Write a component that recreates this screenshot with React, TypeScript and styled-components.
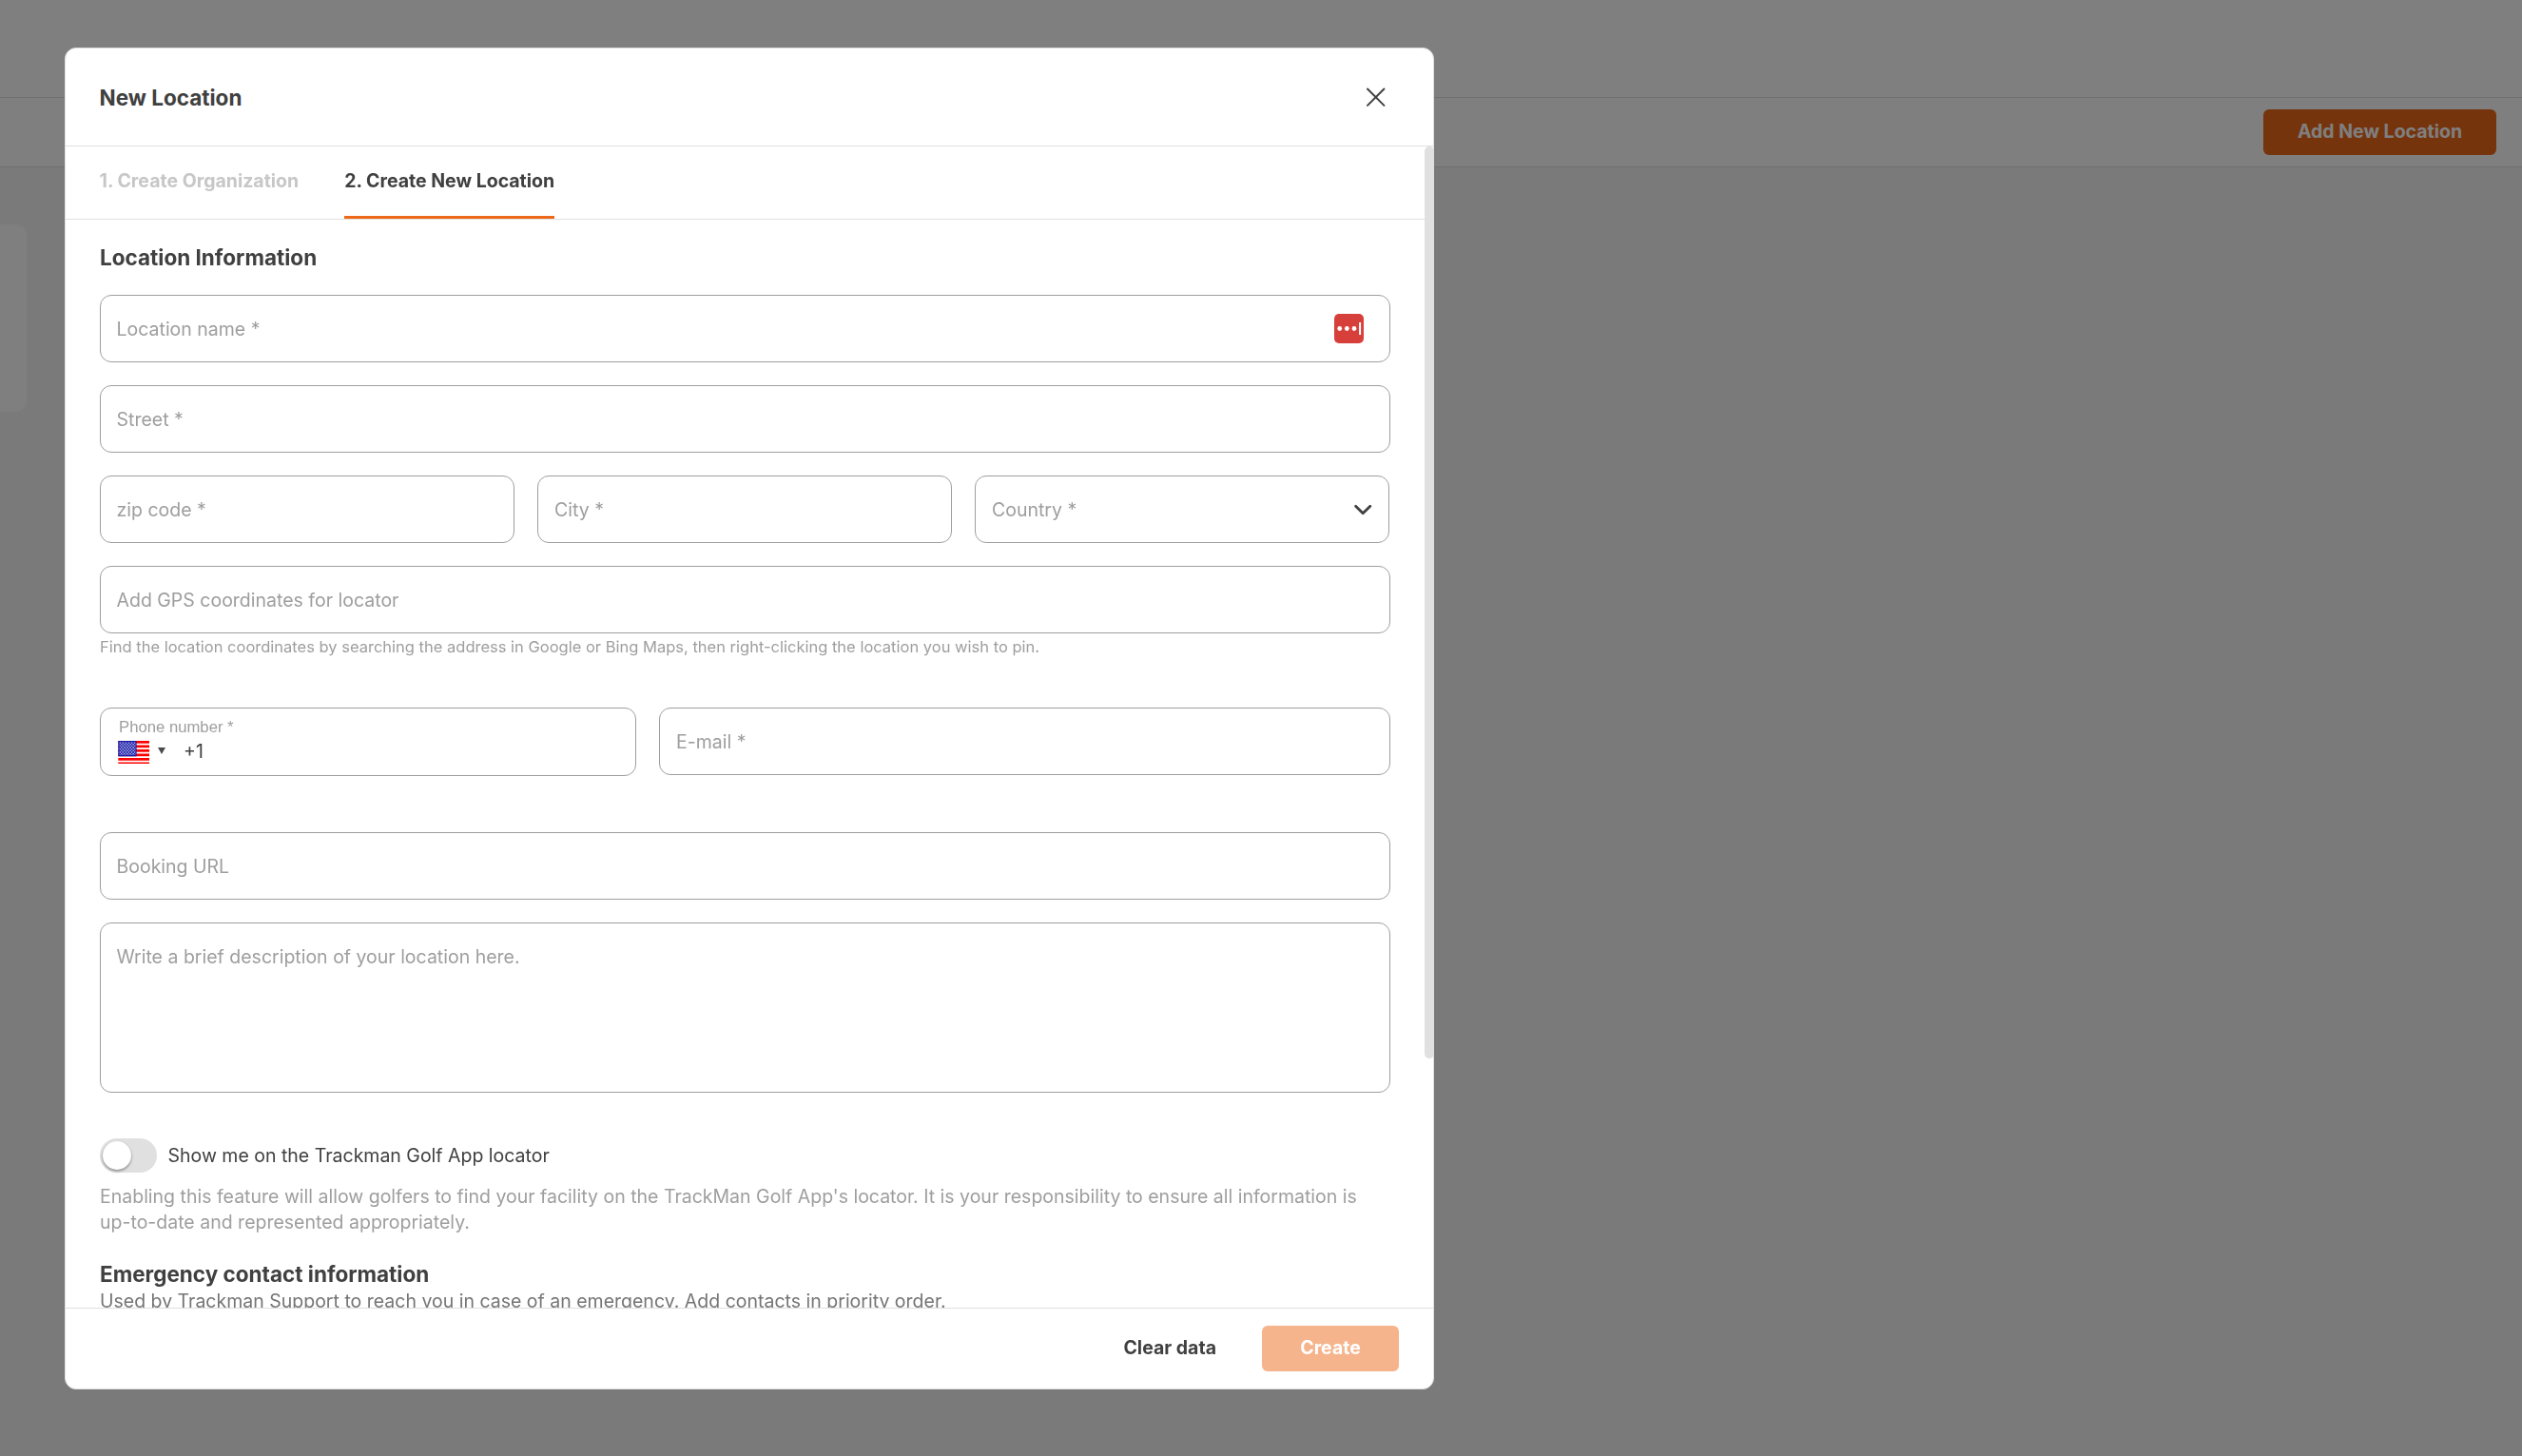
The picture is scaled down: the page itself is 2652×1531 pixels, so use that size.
import React from "react";
import styled, { createGlobalStyle } from "styled-components";

const color = {
  text: "#404040",
  helper: "#757575",
  muted: "#9e9e9e",
  disabled: "#c7c7c7",
  line: "#e0e0e0",
  page: "#f5f5f5",
  accent: "#ec691a",
};

const GlobalStyle = createGlobalStyle`
  *, *::before, *::after { box-sizing: border-box; }
  html, body { margin: 0; padding: 0; overflow: hidden; }
  body {
    font-family: Inter, "Liberation Sans", sans-serif;
    font-size: 19.5px;
    line-height: 27px;
    color: ${color.text};
  }
`;

/* Page behind the dialog */

const Page = styled.div`
  display: flex;
  flex-direction: column;
  height: 1531px;
  background: ${color.page};
`;

const TopBar = styled.header`
  height: 103px;
  background: #fff;
  border-bottom: 1px solid ${color.line};
`;

const Toolbar = styled.div`
  display: flex;
  align-items: center;
  justify-content: flex-end;
  height: 73px;
  padding-right: 27px;
  background: #fff;
  border-bottom: 1px solid ${color.line};
`;

const SideCard = styled.div`
  width: 28px;
  height: 197px;
  margin-top: 60px;
  background: #fff;
  border-radius: 0 12px 12px 0;
`;

const Button = styled.button<{ $kind: "primary" | "text"; $width?: number }>`
  display: flex;
  align-items: center;
  justify-content: center;
  width: ${(p) => (p.$width ? `${p.$width}px` : "auto")};
  height: 48px;
  padding: 0 24px 2px;
  border: 0;
  border-radius: 6px;
  background: ${(p) => (p.$kind === "primary" ? color.accent : "transparent")};
  color: ${(p) => (p.$kind === "primary" ? "#fff" : color.text)};
  font: 700 19.5px/27px Inter, "Liberation Sans", sans-serif;
  white-space: nowrap;

  &:disabled {
    background: #f5b48c;
  }
`;

/* Dialog */

const Overlay = styled.div`
  position: fixed;
  inset: 0;
  padding: 50px 0 0 68px;
  background: rgba(0, 0, 0, 0.5);
`;

const Dialog = styled.section`
  display: flex;
  flex-direction: column;
  width: 1440px;
  height: 1411px;
  background: #fff;
  border: 1px solid ${color.line};
  border-radius: 12px;
`;

const DialogHeader = styled.header`
  display: flex;
  align-items: center;
  justify-content: space-between;
  flex: none;
  height: 103px;
  padding: 0 50px 0 35.5px;
  border-bottom: 1px solid ${color.line};
`;

const Title = styled.h2<{ $drop?: number }>`
  margin: 0;
  padding-top: ${(p) => p.$drop ?? 0}px;
  font-size: 22.5px;
  line-height: 30px;
  font-weight: 700;
`;

const DialogBody = styled.div`
  display: flex;
  flex: none;
  height: 1221px;
  margin-right: -1px;
  overflow: hidden;
`;

const ScrollContent = styled.div`
  flex: 1;
  min-width: 0;
`;

const ScrollThumb = styled.div`
  width: 10px;
  height: 959px;
  border-radius: 5px;
  background: ${color.line};
`;

const Tabs = styled.nav`
  display: flex;
  gap: 48px;
  height: 77px;
  padding-left: 35.5px;
  border-bottom: 1px solid ${color.line};
`;

const Tab = styled.div<{ $active?: boolean }>`
  height: 76px;
  border-bottom: 3px solid ${(p) => (p.$active ? color.accent : "transparent")};
  color: ${(p) => (p.$active ? color.text : color.disabled)};
  font-weight: 700;
  line-height: 73px;
`;

const Form = styled.form`
  display: flex;
  flex-direction: column;
  padding: 25px 36px 0;
`;

const FieldStack = styled.div<{ $top: number }>`
  display: flex;
  flex-direction: column;
  gap: 24px;
  margin-top: ${(p) => p.$top}px;
`;

const ThreeColumns = styled.div`
  display: grid;
  grid-template-columns: repeat(3, 436px);
  column-gap: 24px;
`;

const ContactRow = styled.div`
  display: grid;
  grid-template-columns: 564px 1fr;
  column-gap: 24px;
  align-items: start;
  margin-top: 52px;
`;

const Field = styled.div<{ $end?: number; $start?: number }>`
  display: flex;
  align-items: center;
  justify-content: space-between;
  height: 71px;
  padding: 0 ${(p) => p.$end ?? 16}px 0 ${(p) => p.$start ?? 16.5}px;
  border: 1px solid ${color.muted};
  border-radius: 12px;
  color: ${color.muted};
`;

const Placeholder = styled.span`
  padding-top: 2px;
`;

const TextArea = styled(Field)`
  align-items: flex-start;
  height: 179px;
  padding-top: 20px;
`;

const PhoneField = styled(Field)`
  flex-direction: column;
  align-items: flex-start;
  justify-content: flex-start;
  height: 72px;
  padding: 10px 18px 0;
`;

const PhoneLabel = styled.span`
  padding-left: 1px;
  font: 16.7px/20px "Liberation Sans", Arial, sans-serif;
`;

const PhoneValue = styled.div`
  display: flex;
  align-items: center;
  height: 24px;
  margin-top: 4px;
`;

const Caret = styled.i`
  margin: 0 19px 3px 9px;
  border: 4px solid transparent;
  border-top: 7px solid #4a4a4a;
  border-bottom: 0;
`;

const DialCode = styled.span`
  padding-bottom: 2px;
  color: ${color.text};
`;

const Hint = styled.p`
  margin: 2px 0 0;
  color: ${color.muted};
  font-size: 16.5px;
  line-height: 24px;
`;

const SwitchRow = styled.label`
  display: flex;
  align-items: center;
  gap: 11.5px;
  height: 36px;
  margin-top: 48px;
`;

const SwitchTrack = styled.span`
  display: flex;
  align-items: center;
  width: 60px;
  height: 36px;
  padding: 0 3px;
  border-radius: 18px;
  background: ${color.line};
`;

const SwitchKnob = styled.span`
  width: 30px;
  height: 30px;
  border-radius: 50%;
  background: #fff;
  box-shadow: 0 1.5px 3px rgba(0, 0, 0, 0.4);
`;

const Note = styled.p`
  margin: 12px 0 25px;
  color: ${color.muted};
`;

const Lead = styled.p`
  margin: 0;
  color: ${color.helper};
`;

const DialogFooter = styled.footer`
  display: flex;
  align-items: center;
  justify-content: flex-end;
  flex: 1;
  padding-right: 36px;
  border-top: 1px solid ${color.line};
`;

const FooterActions = styled.div`
  display: flex;
  gap: 24px;
`;

/* Icons */

const CloseIcon = () => (
  <svg width="20" height="20" viewBox="0 0 20 20" fill="none" stroke="#404040" strokeWidth="2" strokeLinecap="round">
    <path d="M1 1.5 18.4 18.9M18.4 1.5 1 18.9" />
  </svg>
);

const ChevronIcon = () => (
  <svg width="20" height="12" viewBox="0 0 20 12" fill="none" stroke="#404040" strokeWidth="2.8" strokeLinecap="round" strokeLinejoin="round">
    <path d="M2.6 2.2 10.2 9.8 17.8 2.2" />
  </svg>
);

const PasswordIcon = () => (
  <svg width="31" height="31" viewBox="0 0 31 31">
    <rect width="31" height="31" rx="5" fill="#d73f3b" />
    <g fill="#fff">
      <circle cx="5.7" cy="15.5" r="2.4" />
      <circle cx="13.3" cy="15.5" r="2.4" />
      <circle cx="21" cy="15.5" r="2.4" />
      <rect x="26.1" y="9" width="2" height="13" />
    </g>
  </svg>
);

const FlagIcon = () => (
  <svg width="33" height="24" viewBox="0 0 33 24">
    <defs>
      <pattern id="stars" x="1.4" y="1.2" width="3.1" height="3.3" patternUnits="userSpaceOnUse">
        <circle cx="0.8" cy="0.8" r="0.75" fill="#c9cff0" />
        <circle cx="2.35" cy="2.45" r="0.75" fill="#c9cff0" />
      </pattern>
    </defs>
    <rect x="0.3" width="32.7" height="24" fill="#fff" />
    {[0, 1, 2, 3, 4, 5].map((n) => (
      <rect key={n} x="0.3" y={n * 4.5} width="32.7" height="2.7" fill="#ff0000" />
    ))}
    <rect x="0.3" width="19.3" height="16.3" fill="#1a1aa6" />
    <rect x="1.4" y="1.2" width="17.2" height="13.8" fill="url(#stars)" />
  </svg>
);

export default function App() {
  return (
    <>
      <GlobalStyle />
      <Page>
        <TopBar />
        <Toolbar>
          <Button $kind="primary" $width={245}>Add New Location</Button>
        </Toolbar>
        <SideCard />
      </Page>
      <Overlay>
        <Dialog>
          <DialogHeader>
            <Title $drop={2}>New Location</Title>
            <CloseIcon />
          </DialogHeader>
          <DialogBody>
            <ScrollContent>
              <Tabs>
                <Tab>1. Create Organization</Tab>
                <Tab $active>2. Create New Location</Tab>
              </Tabs>
              <Form>
                <Title>Location Information</Title>
                <FieldStack $top={24}>
                  <Field $end={27}>
                    <Placeholder>Location name *</Placeholder>
                    <PasswordIcon />
                  </Field>
                  <Field>
                    <Placeholder>Street *</Placeholder>
                  </Field>
                  <ThreeColumns>
                    <Field>
                      <Placeholder>zip code *</Placeholder>
                    </Field>
                    <Field $start={17}>
                      <Placeholder>City *</Placeholder>
                    </Field>
                    <Field $start={17} $end={17}>
                      <Placeholder>Country *</Placeholder>
                      <ChevronIcon />
                    </Field>
                  </ThreeColumns>
                  <Field>
                    <Placeholder>Add GPS coordinates for locator</Placeholder>
                  </Field>
                </FieldStack>
                <Hint>
                  Find the location coordinates by searching the address in Google or Bing Maps, then right-clicking the
                  location you wish to pin.
                </Hint>
                <ContactRow>
                  <PhoneField>
                    <PhoneLabel>Phone number *</PhoneLabel>
                    <PhoneValue>
                      <FlagIcon />
                      <Caret />
                      <DialCode>+1</DialCode>
                    </PhoneValue>
                  </PhoneField>
                  <Field $start={17}>
                    <Placeholder>E-mail *</Placeholder>
                  </Field>
                </ContactRow>
                <FieldStack $top={59}>
                  <Field>
                    <Placeholder>Booking URL</Placeholder>
                  </Field>
                  <TextArea>
                    <Placeholder>Write a brief description of your location here.</Placeholder>
                  </TextArea>
                </FieldStack>
                <SwitchRow>
                  <SwitchTrack>
                    <SwitchKnob />
                  </SwitchTrack>
                  Show me on the Trackman Golf App locator
                </SwitchRow>
                <Note>
                  Enabling this feature will allow golfers to find your facility on the TrackMan Golf App's locator. It
                  is your responsibility to ensure all information is up-to-date and represented appropriately.
                </Note>
                <Title $drop={1}>Emergency contact information</Title>
                <Lead>
                  Used by Trackman Support to reach you in case of an emergency. Add contacts in priority order.
                </Lead>
              </Form>
            </ScrollContent>
            <ScrollThumb />
          </DialogBody>
          <DialogFooter>
            <FooterActions>
              <Button $kind="text">Clear data</Button>
              <Button $kind="primary" $width={144} disabled>Create</Button>
            </FooterActions>
          </DialogFooter>
        </Dialog>
      </Overlay>
    </>
  );
}
